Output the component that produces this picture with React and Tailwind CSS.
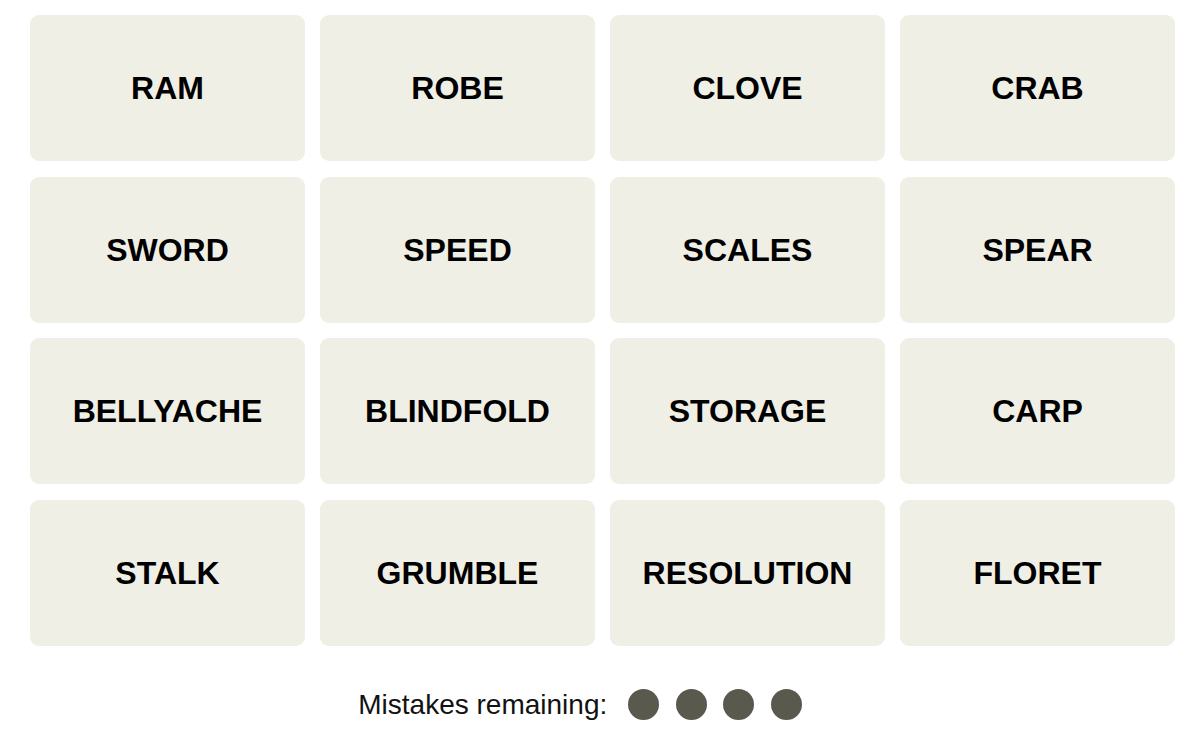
const words = [
  'RAM', 'ROBE', 'CLOVE', 'CRAB',
  'SWORD', 'SPEED', 'SCALES', 'SPEAR',
  'BELLYACHE', 'BLINDFOLD', 'STORAGE', 'CARP',
  'STALK', 'GRUMBLE', 'RESOLUTION', 'FLORET',
];

export default function App() {
  return (
    <div className="w-[1204px] h-[750px] bg-white" style={{ fontFamily: '"Liberation Sans", Arial, sans-serif' }}>
      <div className="grid grid-cols-4 gap-x-[15px] gap-y-[15.6px] pl-[30px] pr-[29px] pt-[15px]">
        {words.map((w) => (
          <button
            key={w}
            className="h-[146px] rounded-[9px] bg-[#efefe6] flex items-center justify-center text-[32px] font-bold text-black"
          >
            {w}
          </button>
        ))}
      </div>

      <div className="flex items-center justify-center mt-[38px] pr-[44px]">
        <span className="text-[28px] text-[#121212] mr-[21px]">Mistakes remaining:</span>
        <div className="flex gap-[16.5px]">
          {[0, 1, 2, 3].map((i) => (
            <span key={i} className="w-[31px] h-[31px] rounded-full bg-[#5a594e]" />
          ))}
        </div>
      </div>
    </div>
  );
}
